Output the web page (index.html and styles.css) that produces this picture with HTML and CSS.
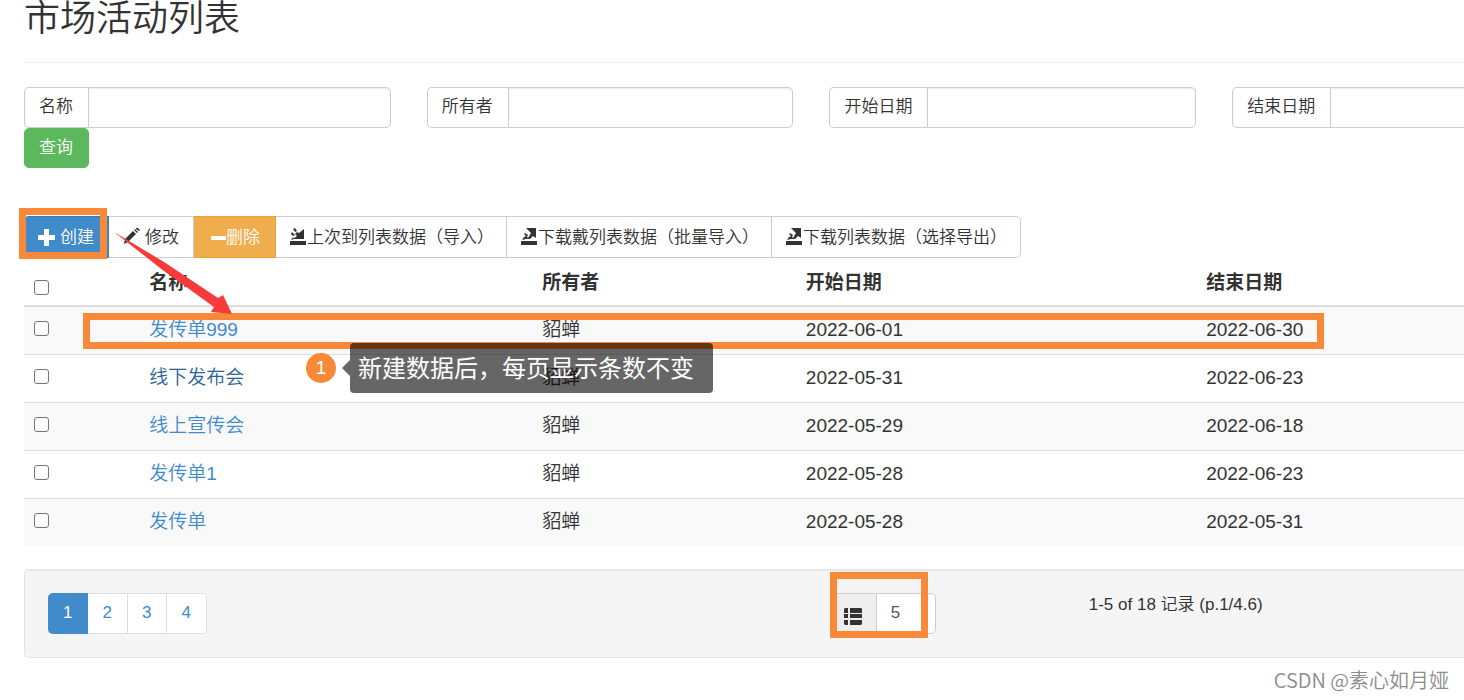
FILE: index.html
```html
<!DOCTYPE html>
<html lang="zh-CN">
<head>
<meta charset="utf-8">
<title>市场活动列表</title>
<link rel="stylesheet" href="styles.css">
</head>
<body>
<main class="page">
  <h1 class="title">市场活动列表</h1>

  <form class="search">
    <div class="fields">
      <div class="field"><label class="addon" for="name">名称</label><input class="control" id="name" type="text"></div>
      <div class="field"><label class="addon" for="owner">所有者</label><input class="control" id="owner" type="text"></div>
      <div class="field"><label class="addon" for="start">开始日期</label><input class="control" id="start" type="text"></div>
      <div class="field field-open"><label class="addon" for="end">结束日期</label><input class="control" id="end" type="text"></div>
    </div>
    <button class="query" type="button">查询</button>
  </form>

  <div class="toolbar">
    <button class="btn btn-primary" type="button"><svg class="icon" viewBox="0 0 17 17"><path d="M6 0h5v6h6v5h-6v6H6v-6H0V6h6z"/></svg><span class="gap">创建</span></button>
    <button class="btn" type="button"><svg class="icon" viewBox="0 0 17 17"><path d="M1 16l1-5 8-8 3 3-8 8zM11 2l1-1 3 3-1 1zM13 0h2l2 2-1 1-3-2z"/></svg><span class="gap">修改</span></button>
    <button class="btn btn-warning" type="button"><svg class="icon icon-minus" viewBox="0 0 16 17"><path d="M1 6h15v4H1z"/></svg>删除</button>
    <button class="btn btn-file" type="button"><svg class="icon" viewBox="0 0 17 17"><path d="M0 13h16v4H0zM3 1l2-1 2 3-2 1zM7 4l2 1 5-4v10H3l4-3-2-2zM2 4l3 3-2 1-2-2zM4 11l-3 1 2-3z"/></svg>上次到列表数据（导入）</button>
    <button class="btn btn-file" type="button"><svg class="icon" viewBox="0 0 17 17"><path d="M0 13h16v4H0zM5 0h10v10l-3-2-3 3H5l-4 1 2-3 2-1 2 2 3-5zM4 5l3 2-1 2-3-3z"/></svg>下载戴列表数据（批量导入）</button>
    <button class="btn btn-file" type="button"><svg class="icon" viewBox="0 0 17 17"><path d="M0 13h16v4H0zM5 0h10v10l-3-2-3 3H5l-4 1 2-3 2-1 2 2 3-5zM4 5l3 2-1 2-3-3z"/></svg>下载列表数据（选择导出）</button>
    <span class="mark mark-create"></span>
  </div>

  <div class="list">
    <table class="table">
      <thead>
        <tr><th class="c-check"><input class="check" type="checkbox" aria-label="全选"></th><th class="c-name">名称</th><th class="c-owner">所有者</th><th class="c-start">开始日期</th><th>结束日期</th></tr>
      </thead>
      <tbody>
        <tr><td><input class="check" type="checkbox" aria-label="发传单999"></td><td><a class="link" href="#">发传单999</a></td><td>貂蝉</td><td>2022-06-01</td><td>2022-06-30</td></tr>
        <tr><td><input class="check" type="checkbox" aria-label="线下发布会"></td><td><a class="link link-hover" href="#">线下发布会</a></td><td>貂蝉</td><td>2022-05-31</td><td>2022-06-23</td></tr>
        <tr><td><input class="check" type="checkbox" aria-label="线上宣传会"></td><td><a class="link" href="#">线上宣传会</a></td><td>貂蝉</td><td>2022-05-29</td><td>2022-06-18</td></tr>
        <tr><td><input class="check" type="checkbox" aria-label="发传单1"></td><td><a class="link" href="#">发传单1</a></td><td>貂蝉</td><td>2022-05-28</td><td>2022-06-23</td></tr>
        <tr><td><input class="check" type="checkbox" aria-label="发传单"></td><td><a class="link" href="#">发传单</a></td><td>貂蝉</td><td>2022-05-28</td><td>2022-05-31</td></tr>
      </tbody>
    </table>
    <span class="mark mark-row"></span>
    <svg class="arrow" viewBox="0 0 120 84"><path d="M0 0L50 30L104 66L109 63L118 82L97 80L100 75L50 39Z"/></svg>
    <div class="note"><span class="note-number">1</span><span class="note-text">新建数据后，每页显示条数不变</span></div>
  </div>

  <div class="well">
    <nav class="pages"><a class="pg pg-active" href="#">1</a><a class="pg" href="#">2</a><a class="pg" href="#">3</a><a class="pg" href="#">4</a></nav>
    <div class="size">
      <label class="size-label" for="size" aria-label="每页条数"><svg class="icon-list" viewBox="0 0 18 17"><path d="M1 0h3v5H0V1zM6 0h11l1 1v4H6zM0 6h4v4H0zM6 6h12v4H6zM0 12h4v5H1l-1-1zM6 12h12v4l-1 1H6z"/></svg></label>
      <input class="size-input" id="size" type="text" value="5">
      <span class="mark mark-size"></span>
    </div>
    <div class="summary">1-5 of 18 记录 (p.1/4.6)</div>
  </div>
  <footer class="credit">CSDN @素心如月娅</footer>
</main>
</body>
</html>
```
FILE: styles.css
```css
* { box-sizing: border-box; }
body {
  margin: 0;
  background: #fff;
  color: #333;
  font: 350 17px/24px "Liberation Sans", "Noto Sans CJK SC", sans-serif;
  overflow-x: hidden;
}
input, button { font: inherit; color: inherit; }
.page { padding-left: 24px; }
.title {
  margin: 0 0 24px;
  padding-bottom: 24px;
  border-bottom: 1px solid #eee;
  font-size: 36px;
  font-weight: 350;
  line-height: 38px;
}

/* search form: the last field runs past the window edge */
.fields {
  display: grid;
  grid-template-columns: repeat(3, minmax(0, 367fr)) minmax(0, 232fr);
  column-gap: 36px;
}
.field { display: flex; height: 41px; }
.addon {
  flex: none;
  padding: 7px 15px 7px 14px;
  border: 1px solid #ccc;
  border-right: 0;
  border-radius: 5px 0 0 5px;
}
.control {
  flex: 1;
  min-width: 0;
  padding: 6px 14px;
  border: 1px solid #ccc;
  border-radius: 0 5px 5px 0;
  background: #fff;
  box-shadow: inset 0 1px 1px rgba(0, 0, 0, .08);
}
.field-open .control { border-right: 0; border-radius: 0; }
.query {
  display: block;
  height: 40px;
  padding: 0 15px 0 14px;
  border: 1px solid #5cb85c;
  border-radius: 5px;
  background: #5cb85c;
  color: #fff;
}

.toolbar { position: relative; display: flex; margin-top: 48px; }
.btn {
  display: flex;
  align-items: center;
  height: 42px;
  padding: 2px 14px 0;
  border: 1px solid #ccc;
  border-left: 0;
  background: #fff;
  white-space: nowrap;
}
.btn-file { padding-right: 12px; }
.toolbar .btn:last-of-type { padding-right: 13px; border-radius: 0 5px 5px 0; }
.btn-primary { border-color: #357ebd; border-radius: 5px 0 0 5px; background: #428bca; color: #fff; }
.btn-warning { padding-left: 16px; padding-right: 15px; border-color: #eea236; background: #f0ad4e; color: #fff; }
.icon { width: 17px; height: 17px; margin-bottom: 4px; fill: currentColor; }
.btn-primary .icon { margin-bottom: 2px; }
.icon-minus { width: 16px; margin-bottom: 0; }
.gap { margin-left: 5px; }

.list { position: relative; }
.table { width: 100%; table-layout: fixed; border-collapse: collapse; font-size: 19px; }
.table th, .table td {
  height: 48px;
  padding: 0 10px;
  border-top: 1px solid #ddd;
  text-align: left;
  vertical-align: middle;
}
.table th { padding-top: 2px; border-top: 0; font-weight: 700; border-bottom: 2px solid #ddd; }
.table .c-check { width: 8%; padding-top: 12px; }
.table td:first-child { padding-bottom: 4px; }
.c-name { width: 27.3%; }
.c-owner { width: 18.3%; }
.c-start { width: 27.8%; }
.table tbody tr:nth-child(odd) { background: #f9f9f9; }
.check {
  appearance: none;
  display: block;
  width: 15px;
  height: 15px;
  margin: 0;
  border: 1px solid #767676;
  border-radius: 3px;
  background: #fff;
}
.link { color: #428bca; text-decoration: none; }
.link-hover { color: #2a6496; }

.well {
  display: grid;
  grid-template-columns: 55.2% 18.3% 1fr;
  align-items: start;
  height: 89px;
  margin-top: 23px;
  padding: 23px 0 0 23px;
  border: 1px solid #e3e3e3;
  border-right: 0;
  border-radius: 5px 0 0 5px;
  background: #f5f5f5;
  box-shadow: inset 0 1px 1px rgba(0, 0, 0, .05);
}
.pages { display: flex; }
.pg {
  padding: 7px 15px 8px 14px;
  border: 1px solid #ddd;
  border-left: 0;
  background: #fff;
  color: #428bca;
  text-decoration: none;
}
.pg:last-child { border-radius: 0 5px 5px 0; }
.pg-active { padding-left: 15px; border-color: #428bca; border-radius: 5px 0 0 5px; background: #428bca; color: #fff; }
.size { position: relative; display: flex; width: 106px; height: 41px; }
.size-label {
  display: flex;
  align-items: center;
  padding: 5px 14px 0 13px;
  border: 1px solid #ccc;
  border-right: 0;
  border-radius: 5px 0 0 5px;
  background: #eee;
}
.icon-list { width: 18px; height: 17px; fill: #333; }
.size-input {
  flex: 1;
  min-width: 0;
  padding: 0 14px 2px;
  border: 1px solid #ccc;
  border-radius: 0 5px 5px 0;
  background: #fff;
  color: #555;
}
.credit {
  padding: 10px 15px 0;
  text-align: right;
  color: #8c8c8c;
  font-family: "Noto Sans CJK SC", sans-serif;
  font-size: 20px;
}

/* annotations drawn over the page */
.mark { position: absolute; border: 7px solid #f88938; pointer-events: none; }
.mark-create { left: -5px; top: -8px; width: 88px; height: 51px; }
.mark-row { left: 59px; right: 140px; top: 55px; height: 36px; }
.mark-size { left: 0; top: -21px; width: 98px; height: 66px; }
.arrow { position: absolute; left: 90px; top: -26px; width: 120px; height: 84px; fill: #f83a3a; }
.note { position: absolute; left: 282px; top: 85px; display: flex; align-items: center; gap: 14px; color: #fff; }
.note-number { width: 30px; height: 30px; border-radius: 50%; background: #f88938; font-size: 19px; line-height: 30px; text-align: center; }
.note-text {
  position: relative;
  padding: 10px 19px 8px 8px;
  border-radius: 4px;
  background: rgba(0, 0, 0, .6);
  font-size: 24px;
  font-weight: 400;
  line-height: 32px;
}
.note-text::before {
  content: "";
  position: absolute;
  right: 100%;
  top: 17px;
  border: 8px solid transparent;
  border-left: 0;
  border-right-color: rgba(0, 0, 0, .6);
}
```
